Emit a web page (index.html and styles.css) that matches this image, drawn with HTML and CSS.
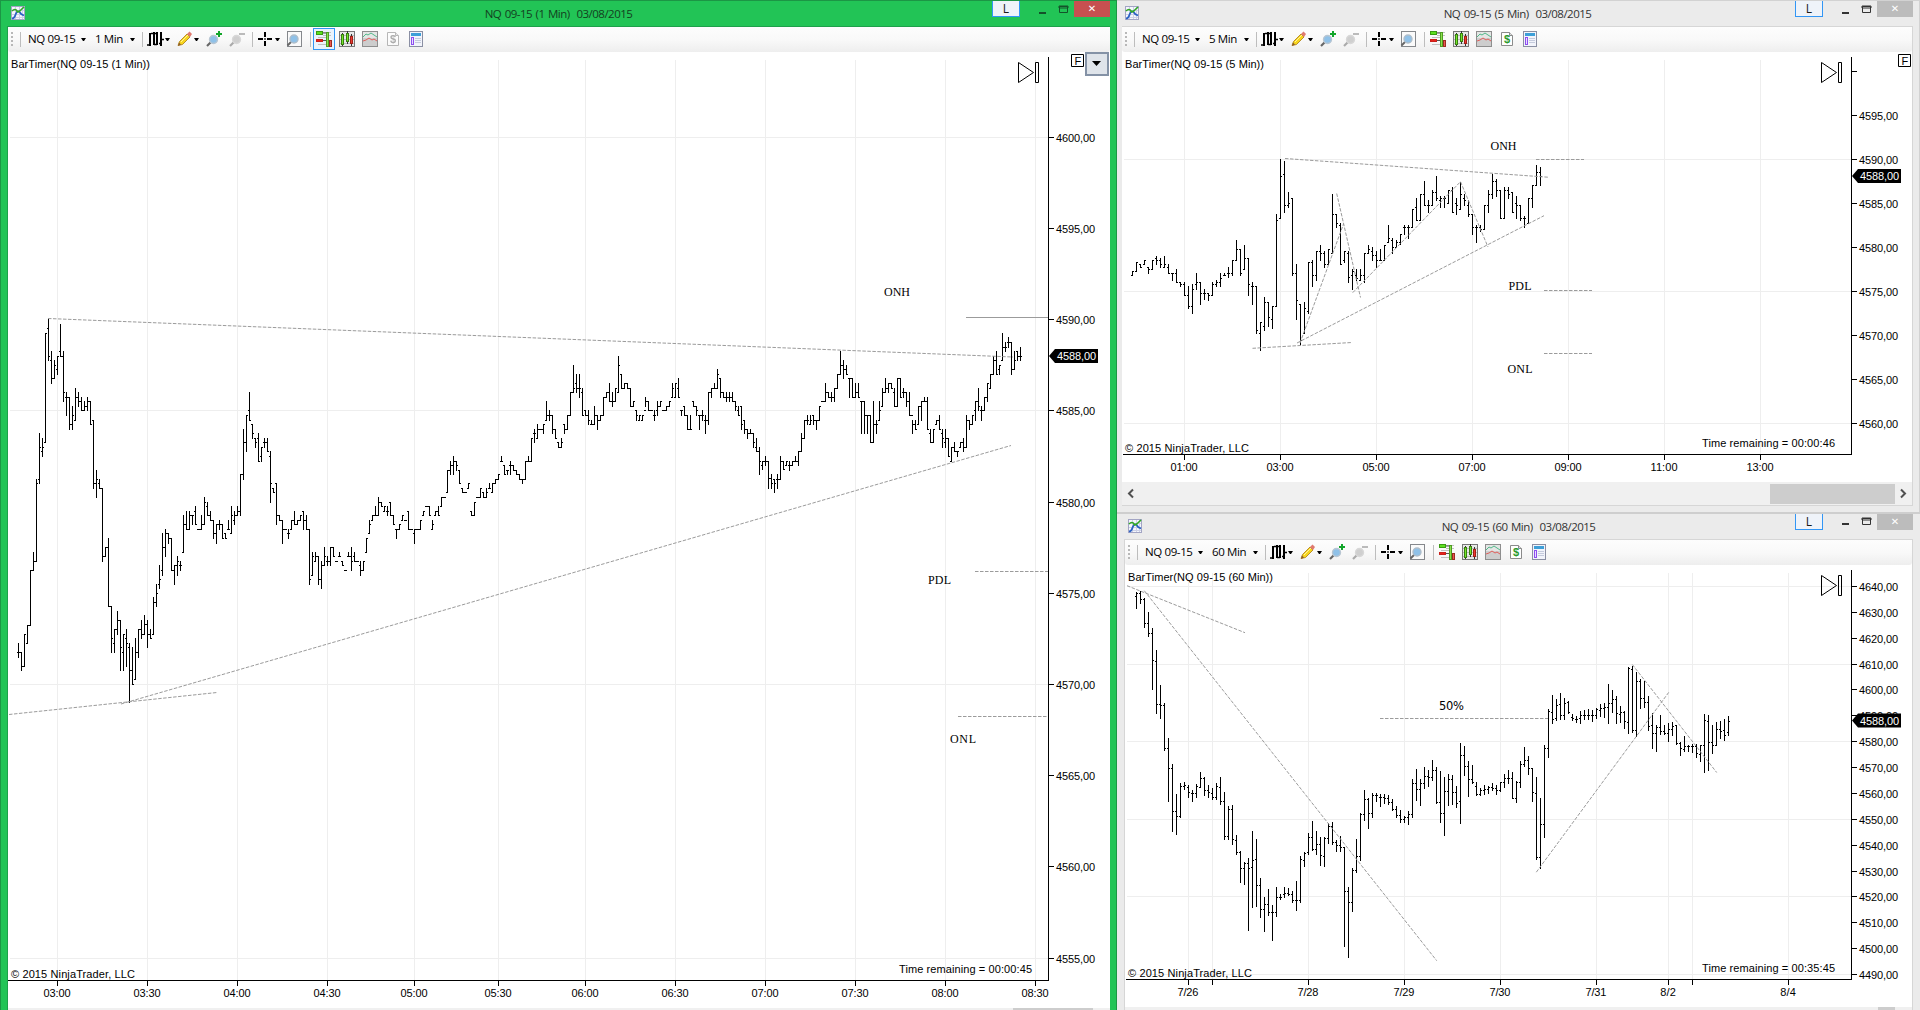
FILE: index.html
```html
<!DOCTYPE html>
<html lang="en">
<head>
    <meta charset="UTF-8">
    <meta name="viewport" content="width=device-width, initial-scale=1.0">
    <title>NQ 09-15</title>
    <link rel="stylesheet" href="styles.css">
</head>
<body>

    <!-- Icons -->
    <svg class="sprite" width="0" height="0">
        <symbol id="logo" viewBox="0 0 14 14">
            <rect x=".5" y=".5" width="13" height="13" fill="#f4f6fc" stroke="#a3a5c4"/>
            <path d="M4.500 1v12M8.500 1v12M11.500 1v12M1 4.500h12M1 8.500h12M1 11.500h12" stroke="#cdd1e6" fill="none"/>
            <path d="M1 12.500c3 0 3-3 4-5s3-3 4-1 2 2 4 3" stroke="#2b62c4" stroke-width="1.700" fill="none"/>
            <path d="M1 5c2-2 4-2 5 0s3 0 7-4" stroke="#32a825" stroke-width="1.700" fill="none"/>
        </symbol>
        <symbol id="bars" viewBox="0 0 17 16">
            <path d="M3 2v13M7 1v13M10 1v13M14 1v14" stroke="#000" stroke-width="2" fill="none"/>
            <path d="M0 14h3M4 2.500h3M8 2.500h2M7 13.500h3M12 12.500h2M14 8.500h3" stroke="#000" stroke-width="1.500" fill="none"/>
        </symbol>
        <symbol id="pencil" viewBox="0 0 16 16">
            <path d="M1 14.500l1.500-4L10 3l3 3-7.500 7.500z" fill="#f7d51d" stroke="#a87912" stroke-width=".8"/>
            <path d="M2 11.500l2 2-3 1.500z" fill="#8a5a2a"/>
            <path d="M10 3l2.500-2.500 2.500 2.500-2 3z" fill="#e07a70"/>
            <path d="M4 11l7-7" stroke="#fff39a" fill="none"/>
        </symbol>
        <symbol id="zoomin" viewBox="0 0 16 16">
            <path d="M1 15l4-4" stroke="#666" stroke-width="2.200"/>
            <circle cx="7.500" cy="8.500" r="4" fill="#8fc1e8" stroke="#b9c6d2" stroke-width="1.400"/>
            <path d="M13 0v6M10 3h6" stroke="#12a52a" stroke-width="2"/>
        </symbol>
        <symbol id="zoomout" viewBox="0 0 16 16">
            <path d="M1 15l4-4" stroke="#aaa" stroke-width="2.200"/>
            <circle cx="7.500" cy="8.500" r="4" fill="#cfcfcf" stroke="#d8d8d8" stroke-width="1.400"/>
            <path d="M10 3h6" stroke="#bbb" stroke-width="2"/>
        </symbol>
        <symbol id="cross" viewBox="0 0 16 16">
            <path d="M7 1v5M7 10v5M0 8h5M9 8h5" stroke="#000" stroke-width="2"/>
            <path d="M6 7h2v2H6z" fill="#666"/>
        </symbol>
        <symbol id="find" viewBox="0 0 16 16">
            <rect x="1.500" y=".5" width="14" height="15" fill="#fafafa" stroke="#85888c"/>
            <path d="M1.500 14.500l4-4" stroke="#666" stroke-width="2"/>
            <circle cx="8" cy="8" r="4" fill="#8fc1e8" stroke="#aebdca" stroke-width="1.400"/>
        </symbol>
        <symbol id="trader" viewBox="0 0 16 16">
            <path d="M7 1.500h8M7 4.500h8M2 6.500h8M7 9.500h3M2 13.500h8" stroke="#c0c0c0"/>
            <rect x=".5" y=".5" width="6" height="3" fill="#5de01f" stroke="#3a9a12"/>
            <rect x=".5" y="8.500" width="6" height="2" fill="#e8221a" stroke="#c8201a"/>
            <path d="M7 2h3M7 9.500h3" stroke="#555"/>
            <rect x="10.500" y="1.500" width="2" height="14" fill="#8be04e" stroke="#4d9c22"/>
            <rect x="13.500" y="9.500" width="2" height="6" fill="#ea5a50" stroke="#9c2a22"/>
        </symbol>
        <symbol id="candles" viewBox="0 0 16 16">
            <rect x=".5" y=".5" width="15" height="15" fill="#e8e8e8" stroke="#777"/>
            <path d="M1 4.500h14M1 8.500h14M1 12.500h14" stroke="#bbb"/>
            <path d="M3.500 2v13M8.500 0v13M12.500 3v12" stroke="#333"/>
            <rect x="2.500" y="3.500" width="2" height="10" fill="#74e829" stroke="#387d12"/>
            <rect x="7.500" y="2.500" width="2" height="8" fill="#74e829" stroke="#387d12"/>
            <rect x="11.500" y="5.500" width="2" height="7" fill="#ee3a30" stroke="#a02018"/>
        </symbol>
        <symbol id="lines" viewBox="0 0 16 16">
            <rect x=".5" y=".5" width="15" height="15" fill="#cdcdcd" stroke="#8e8e8e"/>
            <rect x="1" y="1" width="14" height="6" fill="#e4e6e5"/>
            <path d="M1 6l3-3 2 1 3-2 3 2 3 2" stroke="#52b98a" fill="none"/>
            <path d="M1 10l3-1 3-2 3 2 2-1 3 2" stroke="#e0605c" fill="none"/>
        </symbol>
        <symbol id="account" viewBox="0 0 16 16">
            <path d="M2.500 1.500h8l3 3v10h-11z" fill="#fff" stroke="#8b8b8b"/>
            <path d="M10.500 1.500v3h3" fill="#ddd" stroke="#8b8b8b"/>
            <text x="8" y="12" text-anchor="middle" class="dollar">$</text>
        </symbol>
        <symbol id="panel" viewBox="0 0 16 16">
            <rect x="1.500" y=".5" width="13" height="15" fill="#f2f4fb" stroke="#8a8fa3"/>
            <rect x="3" y="2" width="10" height="3" fill="#3d9fd8"/>
            <rect x="3.500" y="6.500" width="2" height="7" fill="#eadcff" stroke="#8c4ff0"/>
            <path d="M7 7.500h6M7 9.500h6M7 11.500h6" stroke="#c5cbdd"/>
        </symbol>
    </svg>

    <div class="desktop">

        <!-- 1 minute window -->
        <section class="window window-active">
            <header class="titlebar">
                <svg class="logo"><use href="#logo"/></svg>
                <h1 class="title">NQ 09-15 (1 Min)&nbsp; 03/08/2015</h1>
                <div class="controls">
                    <span class="link">L</span>
                    <svg class="win-icons" viewBox="0 0 54 17"><path d="M19 11h7v2h-7z" fill="#14522a"/><path d="M39.500 5.500h8v6h-8zM39 5h9v2h-9z" fill="none" stroke="#14522a"/></svg>
                    <span class="close">✕</span>
                </div>
            </header>
            <div class="client">
                <nav class="toolbar">
                    <span class="grip"></span><span class="sep"></span>
                    <span class="drop name">NQ 09-15</span><span class="caret c5"></span>
                    <span class="drop period">1 Min</span><span class="caret c5"></span>
                    <span class="sep"></span>
                    <svg class="icon wide"><use href="#bars"/></svg><span class="caret"></span>
                    <svg class="icon"><use href="#pencil"/></svg><span class="caret"></span>
                    <svg class="icon"><use href="#zoomin"/></svg>
                    <svg class="icon"><use href="#zoomout"/></svg>
                    <span class="sep"></span>
                    <svg class="icon near"><use href="#cross"/></svg><span class="caret"></span>
                    <svg class="icon find"><use href="#find"/></svg>
                    <span class="sep far"></span>
                    <svg class="icon near selected"><use href="#trader"/></svg>
                    <svg class="icon"><use href="#candles"/></svg>
                    <svg class="icon"><use href="#lines"/></svg>
                    <svg class="icon disabled"><use href="#account"/></svg>
                    <svg class="icon"><use href="#panel"/></svg>
                </nav>
                <svg class="chart" id="chart1" width="1101" height="956" viewBox="8 52 1101 956"></svg>
                <div class="scrollbar"><span class="thumb thumb-left"></span></div>
            </div>
        </section>

        <div class="column">

            <!-- 5 minute window -->
            <section class="window window-top">
                <header class="titlebar">
                    <svg class="logo"><use href="#logo"/></svg>
                    <h1 class="title">NQ 09-15 (5 Min)&nbsp; 03/08/2015</h1>
                    <div class="controls">
                        <span class="link">L</span>
                        <svg class="win-icons" viewBox="0 0 54 17"><path d="M19 11h7v2h-7z" fill="#333"/><path d="M39.500 5.500h8v6h-8zM39 5h9v2h-9z" fill="none" stroke="#333"/></svg>
                        <span class="close">✕</span>
                    </div>
                </header>
                <div class="client">
                    <nav class="toolbar">
                        <span class="grip"></span><span class="sep"></span>
                        <span class="drop name">NQ 09-15</span><span class="caret c5"></span>
                        <span class="drop period">5 Min</span><span class="caret c5"></span>
                        <span class="sep"></span>
                        <svg class="icon wide"><use href="#bars"/></svg><span class="caret"></span>
                        <svg class="icon"><use href="#pencil"/></svg><span class="caret"></span>
                        <svg class="icon"><use href="#zoomin"/></svg>
                        <svg class="icon"><use href="#zoomout"/></svg>
                        <span class="sep"></span>
                        <svg class="icon near"><use href="#cross"/></svg><span class="caret"></span>
                        <svg class="icon find"><use href="#find"/></svg>
                        <span class="sep far"></span>
                        <svg class="icon near"><use href="#trader"/></svg>
                        <svg class="icon"><use href="#candles"/></svg>
                        <svg class="icon"><use href="#lines"/></svg>
                        <svg class="icon"><use href="#account"/></svg>
                        <svg class="icon"><use href="#panel"/></svg>
                    </nav>
                    <svg class="chart" id="chart5" width="790" height="430" viewBox="1122 52 790 430"></svg>
                    <div class="scrollbar">
                        <svg class="arrow" viewBox="0 0 17 17"><path d="M11 4.500L7 8.500l4 4" fill="none" stroke="#505050" stroke-width="2"/></svg>
                        <span class="thumb thumb-top"></span>
                        <svg class="arrow" viewBox="0 0 17 17"><path d="M6 4.500l4 4-4 4" fill="none" stroke="#505050" stroke-width="2"/></svg>
                    </div>
                </div>
            </section>

            <!-- 60 minute window -->
            <section class="window window-bottom">
                <header class="titlebar">
                    <svg class="logo"><use href="#logo"/></svg>
                    <h1 class="title">NQ 09-15 (60 Min)&nbsp; 03/08/2015</h1>
                    <div class="controls">
                        <span class="link">L</span>
                        <svg class="win-icons" viewBox="0 0 54 17"><path d="M19 9h7v2h-7z" fill="#333"/><path d="M39.500 4.500h8v6h-8zM39 4h9v2h-9z" fill="none" stroke="#333"/></svg>
                        <span class="close">✕</span>
                    </div>
                </header>
                <div class="client">
                    <nav class="toolbar">
                        <span class="grip"></span><span class="sep"></span>
                        <span class="drop name">NQ 09-15</span><span class="caret c5"></span>
                        <span class="drop period">60 Min</span><span class="caret c5"></span>
                        <span class="sep"></span>
                        <svg class="icon wide"><use href="#bars"/></svg><span class="caret"></span>
                        <svg class="icon"><use href="#pencil"/></svg><span class="caret"></span>
                        <svg class="icon"><use href="#zoomin"/></svg>
                        <svg class="icon"><use href="#zoomout"/></svg>
                        <span class="sep"></span>
                        <svg class="icon near"><use href="#cross"/></svg><span class="caret"></span>
                        <svg class="icon find"><use href="#find"/></svg>
                        <span class="sep far"></span>
                        <svg class="icon near"><use href="#trader"/></svg>
                        <svg class="icon"><use href="#candles"/></svg>
                        <svg class="icon"><use href="#lines"/></svg>
                        <svg class="icon"><use href="#account"/></svg>
                        <svg class="icon"><use href="#panel"/></svg>
                    </nav>
                    <svg class="chart" id="chart60" width="787" height="442" viewBox="1125 565 787 442"></svg>
                    <div class="scrollbar"><span class="thumb thumb-bottom"></span></div>
                </div>
            </section>
        </div>
    </div>

    <script src="charts.js"></script>
</body>
</html>
```

FILE: styles.css
```css
body {
    margin: 0;
    background: #ebebeb;
    font-family: "Liberation Sans", Arial, sans-serif;
    font-size: 11px;
    overflow: hidden;
}

.sprite {
    display: none;
}

.desktop {
    display: grid;
    grid-template-columns: 1117px 803px;
    width: 1920px;
    height: 1010px;
    overflow: hidden;
}

.column {
    display: flex;
    flex-direction: column;
    height: 1010px;
    overflow: hidden;
}

/* Windows */
.window {
    box-sizing: border-box;
    display: flex;
    flex-direction: column;
    overflow: hidden;
    background: #ebebeb;
    border-top: 1px solid #d2d2d2;
}

.window-active {
    height: 1010px;
    background: #22c456;
    border: 1px solid #1c9645;
    border-bottom: none;
    padding: 0 6px;
}

.window-top {
    height: 512px;
    padding: 0 6px 6px 5px;
    border-right: 1px solid #d2d2d2;
}

.window-bottom {
    flex: 1;
    padding: 0 7px 0 7px;
    border-top: 2px solid #cecece;
}

.titlebar {
    display: grid;
    grid-template-columns: 1fr auto 1fr;
    flex: none;
    height: 25px;
}

.logo {
    width: 14px;
    height: 14px;
    margin: 5px 0 0 4px;
}

.window-top .logo {
    margin-left: 3px;
}

.title {
    margin: 0;
    font-family: "Open Sans", "Noto Sans", sans-serif;
    font-size: 11.5px;
    font-weight: normal;
    line-height: 26px;
    letter-spacing: -0.52px;
    word-spacing: 1px;
    color: #333;
}

.window-active .title {
    color: #14401f;
}

.controls {
    display: flex;
    justify-content: flex-end;
    height: 16px;
}

.link {
    box-sizing: border-box;
    width: 28px;
    height: 16px;
    border: 1px solid #3296f5;
    border-top: none;
    background: #eff3f9;
    color: #1a1a1a;
    font: 12px/15px "Open Sans", sans-serif;
    text-align: center;
}

.win-icons {
    width: 54px;
    height: 17px;
}

.close {
    width: 36px;
    height: 16px;
    background: #bcbcbc;
    color: #fff;
    font: bold 10px/16px "DejaVu Sans", sans-serif;
    text-align: center;
}

.window-active .close {
    background: #c75050;
}

.client {
    flex: 1;
    display: flex;
    flex-direction: column;
    overflow: hidden;
    background: #fff;
    border: 1px solid #d6d6d6;
    border-bottom: none;
}

.window-active .client {
    border-color: #1ea04b;
    border-right: none;
}

.window-top .client {
    border-left: none;
    border-bottom: 1px solid #d6d6d6;
}

/* Toolbar */
.toolbar {
    box-sizing: border-box;
    display: flex;
    align-items: center;
    flex: none;
    height: 25px;
    padding-bottom: 1px;
    background: linear-gradient(#fdfdfd, #f9f9f9 50%, #eeeeee);
    border-radius: 0 0 3px 3px;
}

.grip {
    width: 2px;
    height: 15px;
    margin-left: 3px;
    background: repeating-linear-gradient(#b8b8b8 0 2px, transparent 2px 4px);
}

.sep {
    width: 1px;
    height: 15px;
    margin-left: 7px;
    background: #bdbdbd;
}

.far {
    margin-left: 8px;
}

.drop {
    font-family: "Open Sans", "Noto Sans", sans-serif;
    font-size: 11.5px;
    line-height: 24px;
    letter-spacing: -0.38px;
    white-space: nowrap;
    color: #000;
}

.name {
    width: 48px;
    margin-left: 7px;
}

.period {
    width: 30px;
    margin-left: 9px;
}

.window-bottom .period {
    width: 36px;
}

.caret {
    width: 1px;
    margin-left: 1px;
    border: 2px solid transparent;
    border-top: 3px solid #000;
    border-bottom: none;
}

.c5 {
    margin-left: 5px;
}

.icon {
    flex: none;
    width: 16px;
    height: 16px;
    margin-left: 7px;
}

.wide {
    width: 17px;
    margin-left: 4px;
}

.near {
    margin-left: 5px;
}

.find {
    margin-left: 6px;
}

.selected {
    padding: 2px;
    margin: 0 -3px 0 2px;
    border: 1px solid #3296f5;
    background: #eaf3fc;
}

.disabled {
    filter: grayscale(1);
    opacity: .6;
}

.dollar {
    font: bold 11px "Liberation Sans", sans-serif;
    fill: #2b9a2b;
}

/* Charts */
.chart {
    flex: none;
    display: block;
}

.grid {
    stroke: #eeeeee;
}

.axis,
.ohlc {
    stroke: #000;
    fill: none;
    shape-rendering: crispEdges;
}

.trend {
    stroke: #9b9b9b;
    stroke-dasharray: 3.5 1.5;
}

.solid {
    stroke-dasharray: none;
}

.chart text {
    font-size: 11px;
    fill: #000;
}

.chart .label {
    font-family: "Liberation Serif", "Times New Roman", serif;
    font-size: 12px;
}

.chart .percent {
    font-family: "DejaVu Sans", sans-serif;
    font-size: 11.5px;
}

.chart .last {
    fill: #fff;
}

/* Scrollbars */
.scrollbar {
    flex: 1;
    display: flex;
    align-items: center;
    background: #f0f0f0;
}

.arrow {
    width: 17px;
    height: 17px;
}

.thumb {
    height: 20px;
    margin-left: auto;
    background: #cdcdcd;
}

.thumb-top {
    width: 125px;
}

.thumb-left {
    width: 80px;
    margin-right: 17px;
}

.thumb-bottom {
    width: 17px;
    margin-right: 17px;
}
```

FILE: charts.js
```js
// Bars are "high low open close" in chart units, one bar per comma
const bars1a = `1030 1073 1057 1057,1057 1111 1057 1099,1003 1099 1099 1003,976 1030 1030 976,811 976 976 811,757 811 811 784,538 784 784 550,400 550 538 441,414 468 455 441,99 428 428 99,
57 182 86 168,154 250 182 236,182 236 236 196,168 223 208 168,72 168 154 168,154 304 168 277,277 346 291 291,291 388 291 373,318 388 373 346,264 360 360 291,
277 318 291 304,291 331 304 331,304 331 331 318,291 331 318 304,304 373 304 373,360 565 360 550,511 592 550 538,538 565 550 565,565 784 565 768,742 768 768 742,
715 919 742 919,919 1057 919 1016,987 1057 1030 987,933 1003 987 960,960 1111 960 1043,1003 1111 1057 1003,987 1099 1016 1030,1030 1207 1043 1111,1043 1153 1111 1153,1016 1138 1138 1057,
987 1073 1057 987,960 1016 987 1003,946 1003 1003 973,960 1043 973 1003,987 1016 1003 1016,892 1003 1003 907,852 919 907 880,796 865 852 838,700 825 811 742,688 768 742 700,
700 730 700 715,715 811 715 811,796 852 811 796,768 825 796 784,784 811 796 796,646 757 757 673,634 688 673 688,634 688 688 646,646 673 646 646,619 673 634 673,
688 688 688 688,646 688 688 673,592 673 673 606,606 646 619 646,634 661 646 661,661 715 661 700,673 730 700 673,661 688 673 673,673 715 673 715,700 715 700 715,
661 688 688 688,619 700 700 646,634 673 661 646,619 646 646 634,523 646 634 523,388 538 523 428,346 455 428 346,277 360 331 360,373 414 373 400,414 441 414 428,
400 485 414 485,441 485 468 441,414 441 428 428,414 455 428 455,455 607 468 550,565 577 565 577,550 673 550 646,646 661 646 661,661 730 661 688,688 688 688 688,
688 715 700 700,661 688 688 661,634 673 661 673,661 673 673 661,646 661 661 646,634 688 634 661,646 688 661 688,688 852 688 838,757 825 825 768,757 784 784 768,
768 852 768 838,784 865 838 796,742 796 796 768,768 796 784 784,742 796 784 742,742 768 742 768,784 784 784 784,757 768 768 768,784 796 784 796,811 811 811 811,
757 768 768 768,742 811 768 784,757 784 768 784,784 784 784 784,784 825 796 811,784 811 811 784,715 757 757 715`;

const bars1b = `571 611 611 584,556 571 571 556,529 556 556 556,501 556 556 517,517 529 517 529,529 544 544 529,529 556 544 544,517 556 517 556,556 584 556 584,598 625 598 598,
584 598 598 584,556 571 571 556,571 571 571 571,544 598 544 598,598 598 598 598,598 640 611 598,598 598 598 598,571 598 598 571,544 556 556 544,529 529 529 529,
529 556 529 556,571 598 598 584,544 556 556 544,529 556 544 556,501 529 529 501,501 501 501 501,420 488 488 420,394 434 420 407,379 434 407 394,394 420 394 407,
420 461 420 461,475 488 475 488,488 488 488 488,461 475 475 461,544 556 544 556,517 556 556 517,501 501 501 501,475 501 501 475,488 501 488 501,475 501 501 488,
461 475 475 475,461 488 488 461,448 461 461 448,434 448 448 434,379 394 394 394,407 434 407 434,420 434 420 420,394 434 407 407,407 420 407 420,420 434 420 434,
434 448 434 448,448 461 448 448,394 448 448 394,379 394 394 394,325 394 394 325,298 338 311 311,284 325 325 298,298 298 298 298,284 311 298 284,213 271 271 256,
240 271 256 256,256 311 256 298,298 325 298 325,338 352 338 352,325 352 352 338,284 311 284 298,256 298 298 256,187 256 256 187,106 187 187 175,133 187 160 175,
133 202 175 175,175 256 187 256,240 256 240 256,240 284 256 271,271 284 284 284,228 284 284 256,256 298 256 271,256 271 271 256,202 256 256 202,187 202 202 187,
160 213 187 213,187 228 213 213,175 213 213 175,78 187 187 106,133 175 133 175,160 175 175 160,160 175 160 175,175 228 175 228,213 228 228 213,240 271 240 256,
256 271 271 256,256 271 271 256,202 228 240 213,213 240 213 240,240 240 240 240,240 271 256 256,213 256 240 228,213 228 228 213,240 240 240 240,228 240 240 228,
213 228 228 213,160 202 202 175,160 202 202 160,145 202 175 202,240 256 240 240,228 256 228 256,256 298 256 298,256 298 298 298,213 228 213 228,228 256 228 240,
256 298 256 256,240 271 256 256,256 311 271 271,187 284 271 187,175 202 187 175,160 175 175 175,118 175 175 133,145 202 145 187,187 202 187 202,187 213 202 202`;

const bars1c = `367 394 382 382,367 394 382 394,394 421 394 409,409 436 421 436,409 478 409 464,451 490 451 478,478 505 478 490,478 490 490 490,490 532 490 517,505 544 532 544,
532 613 544 574,574 598 586 574,559 586 574 574,574 655 574 625,613 655 625 640,628 667 628 640,613 655 628 628,559 628 628 574,574 598 574 598,574 586 586 574,
574 601 586 586,574 586 586 574,559 574 574 574,544 586 574 544,490 544 544 505,451 505 505 451,436 464 451 451,436 464 464 451,436 464 436 451,451 478 451 451,
409 451 451 409,394 394 394 394,340 394 394 367,367 382 367 382,367 394 382 382,355 394 382 355,313 355 355 313,244 313 313 286,271 325 286 298,286 313 298 313,
325 382 325 325,325 382 325 382,340 382 382 367,340 382 367 382,394 490 394 394,394 490 394 436,436 490 436 436,436 517 436 517,394 517 517 464,451 490 464 464,
394 451 451 421,355 409 409 367,325 367 367 355,340 367 355 340,340 355 340 355,355 409 367 409,325 409 409 325,325 382 325 382,355 382 367 367,367 409 367 394,
367 436 394 436,451 490 436 464,451 478 464 478,409 464 464 409,394 451 409 394,382 394 394 394,382 478 394 478,478 517 490 517,478 517 517 478,451 464 464 451,
436 478 451 478,478 532 490 505,478 532 517 505,505 559 505 559,532 574 574 532,517 544 532 544,544 559 544 544,517 532 532 517,505 544 517 532,436 532 532 451,
451 478 451 464,436 464 464 436,394 451 421 394,355 421 394 409,409 451 421 421,382 421 421 382,340 394 382 340,313 355 355 313,259 313 313 271,244 313 271 313,
286 313 298 286,190 271 271 232,217 244 232 232,202 232 217 217,217 313 217 298,244 298 298 271,244 271 244 259,232 271 259 259`;

const bars5 = `425 437 437 425,398 425 425 398,404 411 404 411,392 404 404 392,413 431 413 419,392 419 419 392,379 404 386 392,386 411 392 404,379 411 411 404,404 431 411 431,
431 452 431 431,419 458 431 458,458 470 458 464,458 497 464 497,470 536 497 530,464 551 530 479,431 479 464 458,458 524 458 491,479 509 491 491,491 512 491 497,
458 497 497 464,452 470 464 458,431 470 458 446,431 437 437 437,413 443 431 431,392 437 431 392,332 392 392 359,359 437 359 431,346 419 419 386,386 497 386 464,
458 524 470 470,470 611 470 602,578 662 611 578,503 602 590 518,518 590 518 563,530 596 569 530,254 530 530 271,88 266 266 139,94 248 133 227,187 233 227 221,
206 437 206 431,404 569 431 512,524 644 524 632,518 611 611 536,398 551 545 398,392 470 398 437,365 452 437 365,346 392 365 371,365 413 371 404,359 404 404 359,
194 371 371 254,254 293 254 281,281 404 287 404,365 398 392 365,365 458 371 443,419 479 437 425,419 452 437 446,419 452 452 437,371 458 437 371,346 371 371 359,
353 392 365 377,365 413 377 392,359 392 392 392,346 392 392 346,287 338 338 326,326 371 332 353,332 353 353 338,314 344 338 314,287 314 293 293,287 326 293 293,
239 293 293 239,206 272 233 272,194 272 272 194,154 227 194 227,212 248 227 227,182 227 227 187,139 212 187 206,200 233 212 206,200 233 206 206,182 221 221 182,
173 248 182 248,206 254 221 227,158 239 239 194,194 227 206 212,212 260 227 254,254 314 254 293,287 338 293 293,287 305 293 299,227 299 299 227,182 248 227 194,
133 206 194 154,148 200 154 182,182 266 182 266,173 266 266 182,173 206 182 194,188 248 188 248,200 266 221 227,227 272 227 266,260 293 266 266,206 281 281 206,
167 233 206 167,106 167 167 127,112 167 127 139`;

const bars60a = `278 324 290 281,275 311 281 299,296 383 299 371,336 410 371 401,384 567 401 480,450 641 485 614,555 654 614 617,609 752 615 746,714 903 746 806,792 993 806 933,
882 1002 933 948,849 951 948 858,846 867 858 855,855 893 863 876,870 903 879 881,852 893 881 858,816 861 861 836,831 887 836 870,855 891 872 876,864 899 879 891,
849 899 891 858,831 914 861 905,876 1017 905 1008,918 1017 1008 929,917 1032 929 1019,1005 1064 1020 1057,1053 1146 1057 1106,1088 1152 1106 1091,1075 1290 1091 1106,993 1221 1102 1081,
1017 1218 1079 1157,1136 1251 1157 1227,1191 1293 1227 1214,1167 1245 1214 1238,1215 1320 1238 1238,1163 1248 1238 1192,1182 1197 1192 1191,1161 1191 1184 1179,1164 1185 1179 1184,1173 1206 1184 1201,
1143 1230 1201 1201,1069 1206 1201 1079,1056 1100 1081 1060,999 1062 1057 1013,963 1050 1013 1047,995 1064 1047 1034,1011 1095 1034 1067,1011 1098 1069 1014,970 1029 1014 978,968 1032 978 1028,
1020 1053 1028 1035,1008 1053 1035 1042,1042 1338 1042 1175,1163 1371 1175 1206,1105 1233 1206 1111,1017 1116 1111 1068,939 1082 1068 944,870 962 944 899,894 984 899 939,879 953 939 887,
879 905 887 885,882 920 891 893,884 911 893 896,885 912 896 908,897 932 908 929,918 951 929 945,930 966 945 958,948 968 957 953,933 972 953 944,837 951 944 851,
807 900 851 867,837 917 867 851,803 866 851 828,812 858 828 831,780 840 831 812,803 911 812 908,813 966 908 939,831 1005 941 875,822 915 875 837,827 914 837 876,
858 923 876 909,729 969 903 767,738 827 767 798,783 888 798 839,797 849 839 848,848 887 860 882,864 887 882 870,857 882 872 869,858 881 869 863,851 870 863 866,
857 884 866 872,846 873 872 848,824 863 848 836,811 849 836 834,818 896 834 896,843 908 896 846,783 861 846 794,741 798 794 780,768 824 780 804`;

const bars60b = `926 1014 926 990,949 1168 992 1163,1007 1192 1163 1075,865 1110 1075 873,770 898 873 775,731 807 778 796,743 799 793 759,726 796 757 786,739 796 786 754,749 781 752 778,
783 799 791 794,789 804 796 796,775 807 794 786,773 796 786 786,770 796 786 786,773 802 786 786,768 794 786 770,757 789 773 767,754 791 767 765,704 807 765 754,
718 778 754 743,736 807 743 780,762 804 783 778,775 820 778 802,658 833 804 661,656 831 664 826,670 841 826 696,691 767 696 740,694 765 740 752,736 826 752 814,
780 873 812 833,812 881 833 817,786 836 817 828,812 836 828 832,807 855 833 823,804 839 823 814,812 863 812 860,857 892 860 874,841 881 876 868,865 882 868 868,
862 884 868 868,863 898 868 887,864 908 889 865,784 937 864 800,786 932 802 857,812 887 857 864,804 865 864 823,802 846 823 828,796 852 826 838,789 839 830 802`;

const charts = [
    {
        id: 'chart1', left: 8, gridLeft: 10, axisX: 1048, axisTop: 57, axisY: 980, gridTop: 60,
        title: ['BarTimer(NQ 09-15 (1 Min))', 11, 68, 139],
        copy: [11, 978],
        time: ['Time remaining = 00:00:45', 899, 973],
        xs: [[57, '03:00'], [147, '03:30'], [237, '04:00'], [327, '04:30'], [414, '05:00'], [498, '05:30'], [585, '06:00'], [675, '06:30'], [765, '07:00'], [855, '07:30'], [945, '08:00'], [1035, '08:30']],
        prices: { from: 4600, step: -5, count: 10, y: 136.8, gap: 91.2, grid: 3, first: 0 },
        last: 356,
        trends: [[48, 318.5, 1013, 357], [9, 714.5, 217, 692.5], [121, 704, 1011, 445.5], [975, 571.5, 1048, 571.5], [958, 716.5, 1048, 716.5]],
        solid: [[966, 317.5, 1048, 317.5]],
        labels: [['ONH', 884, 296, 26], ['PDL', 928, 584, 23], ['ONL', 950, 743, 26]],
        series: [[bars1a, 18, 3, 300, 3], [bars1b, 369, 3, 330, 3], [bars1c, 729, 3, 270, 3]],
        play: [1018, 62]
    },
    {
        id: 'chart5', left: 1123, gridLeft: 1124, axisX: 1851, axisTop: 57, axisY: 454, gridTop: 60,
        title: ['BarTimer(NQ 09-15 (5 Min))', 1125, 68, 139],
        copy: [1125, 452],
        time: ['Time remaining = 00:00:46', 1702, 447],
        xs: [[1184, '01:00'], [1280, '03:00'], [1376, '05:00'], [1472, '07:00'], [1568, '09:00'], [1664, '11:00'], [1760, '13:00']],
        prices: { from: 4600, step: -5, count: 9, y: 71, gap: 44, grid: 3, first: 2, skip: true },
        last: 176,
        trends: [[1285, 158.5, 1548, 177.2], [1252.5, 348.3, 1352, 342.5], [1297, 343, 1544, 215.7], [1300, 343, 1343.5, 224], [1336.7, 193.5, 1360.5, 297.5], [1352.7, 292.7, 1460.5, 181.7], [1460.5, 181.7, 1488, 247], [1536, 159.5, 1584, 159.5], [1544, 290.5, 1592, 290.5], [1544, 353.5, 1592, 353.5]],
        solid: [],
        labels: [['ONH', 1490.5, 150, 26], ['PDL', 1508.5, 290, 23], ['ONL', 1507.5, 373, 25]],
        series: [[bars5, 1132, 4, 130, 3]],
        play: [1821, 62]
    },
    {
        id: 'chart60', left: 1126, gridLeft: 1127, axisX: 1851, axisTop: 570, axisY: 979, gridTop: 573,
        title: ['BarTimer(NQ 09-15 (60 Min))', 1128, 581, 145],
        copy: [1128, 977],
        time: ['Time remaining = 00:35:45', 1702, 972],
        xs: [[1188, '7/26'], [1212, ''], [1308, '7/28'], [1404, '7/29'], [1500, '7/30'], [1596, '7/31'], [1668, '8/2'], [1692, ''], [1788, '8/4']],
        prices: { from: 4640, step: -10, count: 16, y: 586, gap: 25.87, grid: 3, first: 0 },
        last: 720.5,
        trends: [[1127, 585.7, 1245, 632.7], [1144.3, 590.7, 1436.7, 960.7], [1380, 718.5, 1548, 718.5], [1536.3, 872.2, 1668.7, 692.4], [1632.3, 664.5, 1716.7, 772.5]],
        solid: [],
        labels: [['50%', 1439, 710, 25, 'percent']],
        series: [[bars60a, 1136, 4, 500, 3], [bars60b, 1532, 4, 420, 2.658]],
        play: [1821, 575]
    }
];

function line(x1, y1, x2, y2, cls) {
    return `<line x1="${x1}" y1="${y1}" x2="${x2}" y2="${y2}" class="${cls}"/>`;
}

function text(str, x, y, width, cls) {
    return `<text x="${x}" y="${y}" textLength="${width}" class="${cls || ''}">${str}</text>`;
}

function drawChart(c) {
    let out = '';
    let ticks = '';
    const p = c.prices;

    // Grid and time axis
    c.xs.forEach(([x, name]) => {
        out += line(x + 0.5, c.gridTop, x + 0.5, c.axisY, 'grid');
        ticks += `M${x + 0.5} ${c.axisY}v6`;
        if (name) {
            const w = name.length > 4 ? 27 : name.length * 5.2;
            out += text(name, x - w / 2, c.axisY + 17, w);
        }
    });

    // Price axis
    for (let i = 0; i < p.count; i++) {
        const y = Math.round(p.y + i * p.gap);
        if (i % p.grid === p.first) {
            out += line(c.gridLeft, y + 0.5, c.axisX, y + 0.5, 'grid');
        }
        ticks += `M${c.axisX} ${y + 0.5}h6`;
        if (!(p.skip && i === 0)) {
            out += text((p.from + i * p.step) + ',00', c.axisX + 8, y + 4.5, 39);
        }
    }
    out += `<path class="axis" d="M${c.axisX + 0.5} ${c.axisTop}V${c.axisY}M${c.left} ${c.axisY + 0.5}H${c.axisX + 1}${ticks}"/>`;

    // Price bars
    let d = '';
    c.series.forEach(([data, x0, step, top, scale]) => {
        data.split(',').forEach((bar, i) => {
            const [h, l, o, cl] = bar.trim().split(' ').map(v => Math.floor(top + v / scale));
            const x = x0 + i * step;
            d += `M${x + 0.5} ${h}V${l + 1}M${x - 1} ${o + 0.5}H${x + 1}M${x} ${cl + 0.5}H${x + 2}`;
        });
    });
    out += `<path class="ohlc" d="${d}"/>`;

    c.trends.forEach(t => out += line(...t, 'trend'));
    c.solid.forEach(t => out += line(...t, 'trend solid'));
    c.labels.forEach(([s, x, y, w, cls]) => out += text(s, x, y, w, cls || 'label'));

    out += text(...c.title);
    out += text('© 2015 NinjaTrader, LLC', c.copy[0], c.copy[1], 124);
    out += text(c.time[0], c.time[1], c.time[2], 133);

    // Last price marker
    const ax = c.axisX + 1;
    out += `<path d="M${ax} ${c.last}l6 -7h43v14h-43z"/>`;
    out += text('4588,00', c.axisX + 9, c.last + 4, 39, 'last');

    // Go to last bar
    const [px, py] = c.play;
    out += `<path d="M${px + 0.5} ${py + 0.5}v20l15 -10zM${px + 17.5} ${py + 0.5}h3v20h-3z" fill="none" stroke="#000"/>`;

    if (c.id !== 'chart60') {
        const fx = c.id === 'chart1' ? 1071 : 1898;
        out += `<path d="M${fx + 0.5} 54.5h12v12h-12z" fill="#fff" stroke="#000"/>` + text('F', fx + 3.5, 65, 6);
    }
    if (c.id === 'chart1') {
        out += '<path d="M1086 53h22v22h-22z" fill="#dfe4ea" stroke="#8492a6" stroke-width="2"/><path d="M1092 61h9l-4.500 5z"/>';
    }

    document.getElementById(c.id).innerHTML = out;
}

charts.forEach(drawChart);
```
